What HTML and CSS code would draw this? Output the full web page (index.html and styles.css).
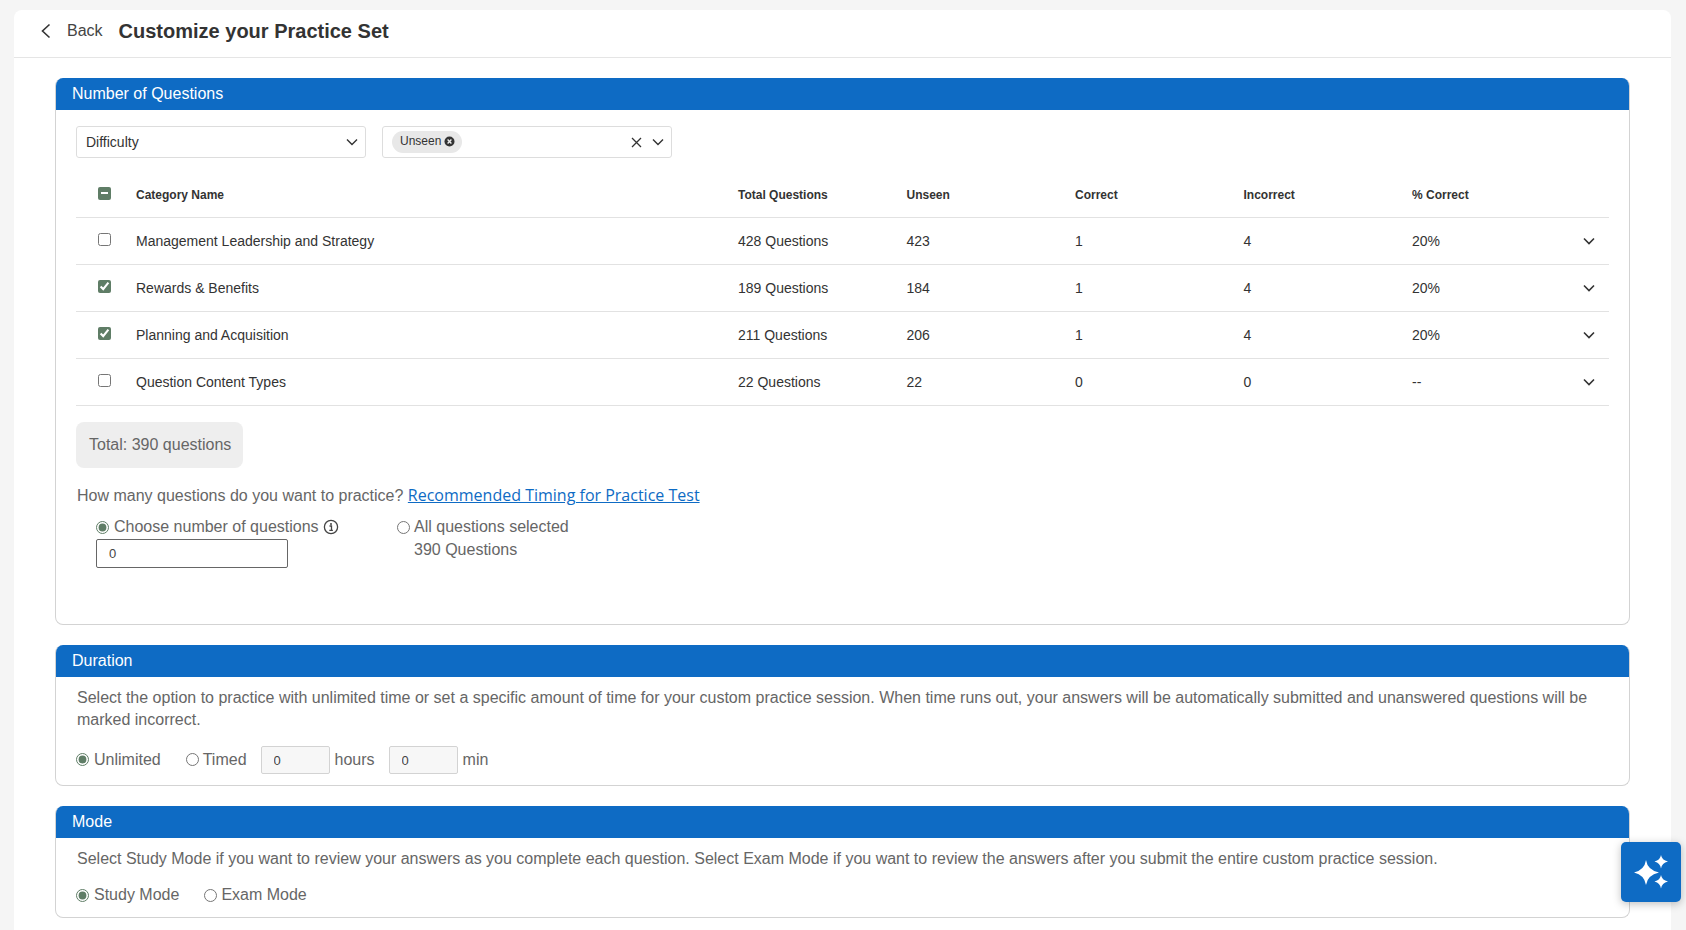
FILE: index.html
```html
<!DOCTYPE html>
<html lang="en">
<head>
<meta charset="utf-8">
<title>Customize your Practice Set</title>
<link rel="stylesheet" href="styles.css">
</head>
<body>
<main class="card">
  <header class="topbar">
    <svg class="back-icon" width="11" height="16" viewBox="0 0 11 16"><path d="M9.500 1.500 2.500 8l7 6.500" fill="none" stroke="#333" stroke-width="1.600"/></svg>
    <span class="back">Back</span>
    <h1 class="title">Customize your Practice Set</h1>
  </header>
  <div class="content">
    <section class="panel panel-questions">
      <h2 class="panel-head">Number of Questions</h2>
      <div class="panel-body">
        <div class="filters">
          <div class="select">
            <span class="select-value">Difficulty</span>
            <svg class="chev" width="12" height="8" viewBox="0 0 12 8"><path d="M1 1.5 6 6.5l5-5" fill="none" stroke="#333" stroke-width="1.4"/></svg>
          </div>
          <div class="select select-multi">
            <span class="chip">Unseen
              <svg class="chip-x" width="11" height="11" viewBox="0 0 11 11"><circle cx="5.5" cy="5.5" r="5" fill="#333"/><path d="M3.6 3.6l3.8 3.8M7.4 3.6 3.6 7.4" stroke="#eee" stroke-width="1.4"/></svg>
            </span>
            <svg class="clear" width="11" height="11" viewBox="0 0 11 11"><path d="M1 1l9 9M10 1l-9 9" stroke="#333" stroke-width="1.3"/></svg>
            <svg class="chev" width="12" height="8" viewBox="0 0 12 8"><path d="M1 1.5 6 6.5l5-5" fill="none" stroke="#333" stroke-width="1.4"/></svg>
          </div>
        </div>
        <div class="table">
          <div class="row row-head">
            <span class="cell-check"><span class="indeterminate"></span></span>
            <span>Category Name</span><span>Total Questions</span><span>Unseen</span><span>Correct</span><span>Incorrect</span><span>% Correct</span><span></span>
          </div>
          <div class="row">
            <span class="cell-check"><input type="checkbox"></span>
            <span>Management Leadership and Strategy</span><span>428 Questions</span><span>423</span><span>1</span><span>4</span><span>20%</span>
            <svg class="row-chev" width="12" height="8" viewBox="0 0 12 8"><path d="M1 1.5 6 6.5l5-5" fill="none" stroke="#333" stroke-width="1.6"/></svg>
          </div>
          <div class="row">
            <span class="cell-check"><input type="checkbox" checked></span>
            <span>Rewards &amp; Benefits</span><span>189 Questions</span><span>184</span><span>1</span><span>4</span><span>20%</span>
            <svg class="row-chev" width="12" height="8" viewBox="0 0 12 8"><path d="M1 1.5 6 6.5l5-5" fill="none" stroke="#333" stroke-width="1.6"/></svg>
          </div>
          <div class="row">
            <span class="cell-check"><input type="checkbox" checked></span>
            <span>Planning and Acquisition</span><span>211 Questions</span><span>206</span><span>1</span><span>4</span><span>20%</span>
            <svg class="row-chev" width="12" height="8" viewBox="0 0 12 8"><path d="M1 1.5 6 6.5l5-5" fill="none" stroke="#333" stroke-width="1.6"/></svg>
          </div>
          <div class="row">
            <span class="cell-check"><input type="checkbox"></span>
            <span>Question Content Types</span><span>22 Questions</span><span>22</span><span>0</span><span>0</span><span>--</span>
            <svg class="row-chev" width="12" height="8" viewBox="0 0 12 8"><path d="M1 1.5 6 6.5l5-5" fill="none" stroke="#333" stroke-width="1.6"/></svg>
          </div>
        </div>
        <div class="total">Total: 390 questions</div>
        <p class="ask">How many questions do you want to practice? <a class="link" href="#">Recommended Timing for Practice Test</a></p>
        <div class="count-options">
          <div class="count-choose">
            <label class="radio"><input type="radio" name="count" checked>Choose number of questions
              <svg class="info" width="16" height="16" viewBox="0 0 16 16"><circle cx="8" cy="8" r="6.6" fill="none" stroke="#444" stroke-width="1.3"/><circle cx="8" cy="4.9" r="1" fill="#444"/><path d="M6.5 7h2v4.2M6.3 11.300h3.600" fill="none" stroke="#444" stroke-width="1.3"/></svg>
            </label>
            <input class="count-input" type="text" value="0">
          </div>
          <div class="count-all">
            <label class="radio"><input type="radio" name="count">All questions selected</label>
            <div class="count-note">390 Questions</div>
          </div>
        </div>
      </div>
    </section>
    <section class="panel">
      <h2 class="panel-head">Duration</h2>
      <div class="panel-body panel-body-text">
        <p class="desc">Select the option to practice with unlimited time or set a specific amount of time for your custom practice session. When time runs out, your answers will be automatically submitted and unanswered questions will be marked incorrect.</p>
        <div class="options options-duration">
          <label class="radio"><input type="radio" name="dur" checked>Unlimited</label>
          <label class="radio radio-timed"><input type="radio" name="dur">Timed</label>
          <input class="time-input" type="text" value="0" disabled><span class="unit">hours</span>
          <input class="time-input time-min" type="text" value="0" disabled><span class="unit">min</span>
        </div>
      </div>
    </section>
    <section class="panel">
      <h2 class="panel-head">Mode</h2>
      <div class="panel-body panel-body-text">
        <p class="desc">Select Study Mode if you want to review your answers as you complete each question. Select Exam Mode if you want to review the answers after you submit the entire custom practice session.</p>
        <div class="options options-mode">
          <label class="radio"><input type="radio" name="mode" checked>Study Mode</label>
          <label class="radio radio-exam"><input type="radio" name="mode">Exam Mode</label>
        </div>
      </div>
    </section>
  </div>
</main>
<button class="fab" type="button" aria-label="AI assistant">
  <svg width="36" height="34" viewBox="0 0 36 34"><path fill="#fff" d="M13 5Q14.5 15 26 17.500Q14.500 20 13 30Q11.500 20 1 17.500Q11.500 15 13 5Z"/><path fill="#fff" d="M28 0Q28.800 5 35 6.500Q28.800 8 28 13.500Q27.200 8 21.500 6.500Q27.200 5 28 0Z"/><path fill="#fff" d="M28 20Q28.800 25 35 26.500Q28.800 28 28 33.500Q27.200 28 21.500 26.500Q27.200 25 28 20Z"/></svg>
</button>
</body>
</html>
```
FILE: styles.css
```css
* { box-sizing: border-box; }
html, body { height: 100%; }
body {
  margin: 0;
  padding: 10px 15px 0 14px;
  background: #f5f5f5;
  overflow: hidden;
  font-family: "Liberation Sans", Arial, sans-serif;
  color: #666;
}
.card {
  background: #fff;
  border-radius: 8px 8px 0 0;
  height: 920px;
}
.topbar {
  display: flex;
  align-items: center;
  height: 48px;
  border-bottom: 1px solid #e5e5e5;
  padding: 0 0 5px 26px;
  color: #333;
}
.back-icon { margin-right: 16px; }
.back { font-size: 16px; color: #444; margin-right: 16px; }
.title { margin: 0; font-size: 20px; font-weight: 700; color: #333; }
.content {
  padding: 20px 41px 0;
  display: flex;
  flex-direction: column;
  gap: 20px;
}
.panel {
  border: 1px solid #d3d3d3;
  border-top: 0;
  border-radius: 8px;
  overflow: hidden;
}
.panel-questions { height: 547px; }
.panel-head {
  margin: 0;
  height: 32px;
  background: #0e6bc4;
  color: #fff;
  font-weight: 400;
  font-size: 16px;
  line-height: 32px;
  padding-left: 16px;
}
.panel-body { padding: 16px 20px 0; }
.filters { display: flex; gap: 16px; }
.select {
  width: 290px;
  height: 32px;
  border: 1px solid #ddd;
  border-radius: 3px;
  display: flex;
  align-items: center;
  padding: 0 7px 0 9px;
  font-size: 14px;
  color: #333;
}
.select-value { flex: 1; }
.select-multi { padding: 0 7px 0 9px; }
.chip {
  display: inline-flex;
  align-items: center;
  gap: 3px;
  height: 22px;
  border-radius: 11px;
  background: #e8e8e8;
  padding: 0 7px 2px 8px;
  font-size: 12px;
  margin-right: auto;
}
.clear { margin-right: 10px; }
.table { margin-top: 15px; font-size: 14px; color: #333; }
.row {
  display: grid;
  grid-template-columns: 60px 602px 168.500px 168.500px 168.500px 168.500px 1fr 26px;
  align-items: center;
  height: 47px;
  border-bottom: 1px solid #e2e2e2;
}
.row-head { font-size: 12px; font-weight: 700; height: 45px; }
.cell-check { display: flex; padding-left: 22px; margin-top: -3px; }
.cell-check input { margin: 0; width: 13px; height: 13px; accent-color: #5f7d66; }
.indeterminate {
  width: 13px;
  height: 13px;
  margin-top: -1px;
  border-radius: 2px;
  background: #5f7d66;
  display: flex;
  align-items: center;
  justify-content: center;
}
.indeterminate::before { content: ""; width: 7px; height: 2px; background: #fff; }
.row-chev { justify-self: start; }
.total {
  margin-top: 16px;
  width: 167px;
  height: 46px;
  background: #eee;
  border-radius: 8px;
  padding-left: 13px;
  line-height: 46px;
  font-size: 16px;
}
.ask { margin: 16px 0 0; padding-left: 1px; font-size: 16px; line-height: 22px; }
.link { font-family: "Open Sans", sans-serif; color: #0e6bc4; }
.count-options { display: flex; padding-left: 20px; margin-top: 9px; }
.count-choose { width: 301px; }
.radio { display: inline-flex; align-items: center; font-size: 16px; line-height: 22px; white-space: nowrap; }
.radio input { margin: 0 5px 0 0; width: 13px; height: 13px; accent-color: #5f7d66; }
.radio input:not(:checked) { margin-right: 4px; }
.info { margin-left: 4px; }
.count-input {
  display: block;
  width: 192px;
  height: 29px;
  margin-top: 1px;
  border: 1px solid #666;
  border-radius: 2px;
  padding: 0 11px 0 12px;
  font: 13px "Liberation Sans", Arial, sans-serif;
  color: #444;
}
.count-note { padding-left: 17px; margin-top: 1px; font-size: 16px; line-height: 22px; }
.panel-body-text { padding: 10px 20px 0; }
.desc { margin: 0; padding-left: 1px; font-size: 16px; line-height: 22px; }
.options { display: flex; align-items: center; }
.options-duration { margin-top: 14px; padding-bottom: 11px; }
.options-mode { margin-top: 14px; padding-bottom: 11px; }
.radio-timed { margin-left: 25px; }
.radio-exam { margin-left: 25px; }
.time-input {
  width: 69px;
  height: 28px;
  margin: 1px 0 0 14px;
  border: 1px solid #d3d3d3;
  border-radius: 2px;
  background: #f7f7f7;
  padding: 0 11px 0 12px;
  font: 13px "Liberation Sans", Arial, sans-serif;
  color: #444;
}
.unit { margin-left: 5px; font-size: 16px; }
.fab {
  position: fixed;
  left: 1621px;
  top: 842px;
  width: 60px;
  height: 60px;
  border: 0;
  padding: 0;
  border-radius: 5px;
  background: #0e6bc4;
  box-shadow: 0 2px 8px rgba(0,0,0,.25);
  display: flex;
  align-items: center;
  justify-content: center;
}
```
